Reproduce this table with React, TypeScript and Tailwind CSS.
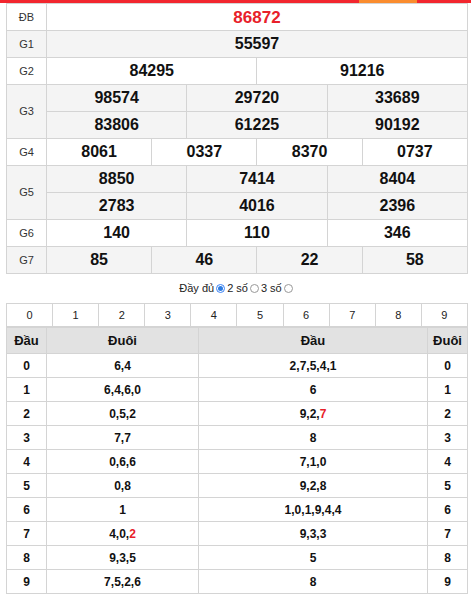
import React from "react";

type Prize = { label: string; nums: string[]; perRow?: number; red?: boolean };

const PRIZES: Prize[] = [
  { label: "ĐB", nums: ["86872"], red: true },
  { label: "G1", nums: ["55597"] },
  { label: "G2", nums: ["84295", "91216"] },
  { label: "G3", nums: ["98574", "29720", "33689", "83806", "61225", "90192"], perRow: 3 },
  { label: "G4", nums: ["8061", "0337", "8370", "0737"] },
  { label: "G5", nums: ["8850", "7414", "8404", "2783", "4016", "2396"], perRow: 3 },
  { label: "G6", nums: ["140", "110", "346"] },
  { label: "G7", nums: ["85", "46", "22", "58"] },
];

// [dau, duoi, dau (reverse), duoi]; "*" marks the red digit
const LOTO: [string, string[], string[]][] = [
  ["0", ["6", "4"], ["2", "7", "5", "4", "1"]],
  ["1", ["6", "4", "6", "0"], ["6"]],
  ["2", ["0", "5", "2"], ["9", "2", "7*"]],
  ["3", ["7", "7"], ["8"]],
  ["4", ["0", "6", "6"], ["7", "1", "0"]],
  ["5", ["0", "8"], ["9", "2", "8"]],
  ["6", ["1"], ["1", "0", "1", "9", "4", "4"]],
  ["7", ["4", "0", "2*"], ["9", "3", "3"]],
  ["8", ["9", "3", "5"], ["5"]],
  ["9", ["7", "5", "2", "6"], ["8"]],
];

function Digits({ list }: { list: string[] }) {
  return (
    <>
      {list.map((d, i) => (
        <React.Fragment key={i}>
          {i > 0 && ","}
          {d.endsWith("*") ? <span className="text-[#e8202a]">{d[0]}</span> : d}
        </React.Fragment>
      ))}
    </>
  );
}

function PrizeTable() {
  const cell = "border border-[#d4d4d4] text-center";
  return (
    <table className="w-full table-fixed border-collapse">
      <colgroup>
        <col className="w-[40px]" />
        {Array.from({ length: 12 }).map((_, i) => (
          <col key={i} />
        ))}
      </colgroup>
      <tbody>
        {PRIZES.map((p, pi) => {
          const per = p.perRow ?? p.nums.length;
          const rows: string[][] = [];
          for (let i = 0; i < p.nums.length; i += per) rows.push(p.nums.slice(i, i + per));
          const bg = pi % 2 === 1 ? "bg-[#f4f4f4]" : "bg-white";
          return rows.map((r, ri) => (
            <tr key={p.label + ri} className={bg}>
              {ri === 0 && (
                <td rowSpan={rows.length} className={`${cell} text-[11px] text-[#333]`}>
                  {p.label}
                </td>
              )}
              {r.map((n, ni) => (
                <td
                  key={ni}
                  colSpan={12 / per}
                  className={`${cell} h-[27px] text-[16px] font-bold leading-none ${
                    p.red ? "text-[#e8202a] text-[17px]" : "text-[#111]"
                  }`}
                >
                  {n}
                </td>
              ))}
            </tr>
          ));
        })}
      </tbody>
    </table>
  );
}

function Radio({ checked }: { checked?: boolean }) {
  return (
    <span
      className={`mx-[2px] inline-flex h-[9px] w-[9px] items-center justify-center rounded-full border ${
        checked ? "border-[#3b82f6]" : "border-[#999] bg-white"
      }`}
    >
      {checked && <span className="h-[5px] w-[5px] rounded-full bg-[#2f7de1]" />}
    </span>
  );
}

export default function App() {
  const cell = "border border-[#d4d4d4] text-center";
  return (
    <div className="min-h-[598px] w-[471px] bg-white font-['Liberation_Sans',Arial,sans-serif]">
      <div className="flex h-[3px]">
        <div className="w-[359px] bg-[#f2262e]" />
        <div className="w-[58px] bg-[#fa8c2e]" />
        <div className="flex-1 bg-[#f2262e]" />
      </div>

      <div className="pl-[6px] pr-[3px]">
        <PrizeTable />

        <div className="flex h-[29px] items-center justify-center text-[11px] text-[#222]">
          Đầy đủ
          <Radio checked />
          2 số
          <Radio />
          3 số
          <Radio />
        </div>

        <table className="w-full table-fixed border-collapse">
          <tbody>
            <tr>
              {Array.from({ length: 10 }).map((_, i) => (
                <td key={i} className={`${cell} h-[23px] text-[11px] text-[#222]`}>
                  {i}
                </td>
              ))}
            </tr>
          </tbody>
        </table>

        <table className="w-full table-fixed border-collapse text-[12px] font-bold text-[#111]">
          <colgroup>
            <col className="w-[40px]" />
            <col className="w-[152px]" />
            <col />
            <col className="w-[40px]" />
          </colgroup>
          <thead>
            <tr className="bg-[#e2e2e2]">
              <th className={`${cell} h-[26px] text-[13px]`}>Đầu</th>
              <th className={`${cell} text-[13px]`}>Đuôi</th>
              <th className={`${cell} text-[13px]`}>Đầu</th>
              <th className={`${cell} text-[13px]`}>Đuôi</th>
            </tr>
          </thead>
          <tbody>
            {LOTO.map(([d, duoi, dau]) => (
              <tr key={d}>
                <td className={`${cell} h-[24px]`}>{d}</td>
                <td className={cell}>
                  <Digits list={duoi} />
                </td>
                <td className={cell}>
                  <Digits list={dau} />
                </td>
                <td className={cell}>{d}</td>
              </tr>
            ))}
          </tbody>
        </table>
      </div>
    </div>
  );
}
